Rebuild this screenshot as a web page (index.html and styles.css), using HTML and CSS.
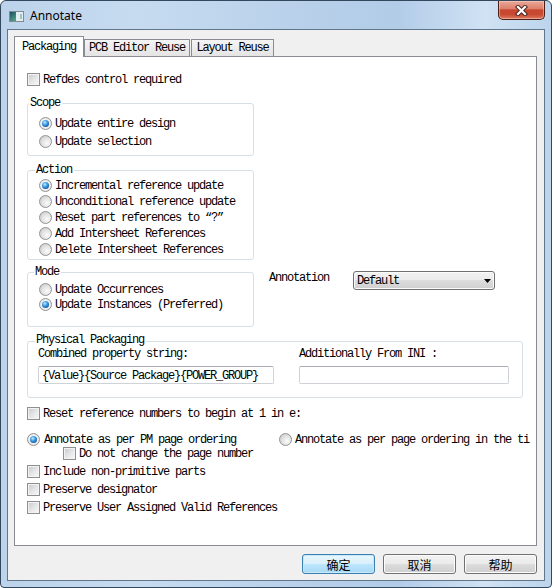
FILE: index.html
```html
<!DOCTYPE html>
<html>
<head>
<meta charset="utf-8">
<title>Annotate</title>
<link rel="stylesheet" href="styles.css">
</head>
<body>
<div class="window">
  <div class="titlebar">
    <svg class="app-icon" width="15" height="11" viewBox="0 0 15 11">
      <defs>
        <linearGradient id="ig" x1="0" y1="0" x2="0.6" y2="1">
          <stop offset="0" stop-color="#1c4f63"/>
          <stop offset="1" stop-color="#4f9c86"/>
        </linearGradient>
      </defs>
      <rect x="0.5" y="0.5" width="14" height="10" fill="#e4eef0" stroke="#7d8b92"/>
      <rect x="1" y="1" width="6" height="9" fill="url(#ig)"/>
      <rect x="11" y="3" width="2" height="5" fill="#9cc4c4"/>
    </svg>
    <span class="title">Annotate</span>
    <div class="close">
      <svg width="13" height="11" viewBox="0 0 13 11">
        <path d="M3 2 L10 9 M10 2 L3 9" stroke="#4a2620" stroke-width="4.2" stroke-linecap="square" fill="none"/>
        <path d="M3 2 L10 9 M10 2 L3 9" stroke="#ffffff" stroke-width="2.2" stroke-linecap="square" fill="none"/>
      </svg>
    </div>
  </div>
  <div class="client">
    <div class="tabs">
      <div class="tab active">Packaging</div>
      <div class="tab t2">PCB Editor Reuse</div>
      <div class="tab t3">Layout Reuse</div>
    </div>
    <div class="panel">
      <div class="row"><span class="cb"></span><span class="txt">Refdes control required</span></div>

      <div class="group g-scope">
        <span class="legend">Scope</span>
        <div class="opts">
          <div class="row"><span class="rb on"></span><span class="txt">Update entire design</span></div>
          <div class="row"><span class="rb"></span><span class="txt">Update selection</span></div>
        </div>
      </div>

      <div class="group g-action">
        <span class="legend">Action</span>
        <div class="opts">
          <div class="row"><span class="rb on"></span><span class="txt">Incremental reference update</span></div>
          <div class="row"><span class="rb"></span><span class="txt">Unconditional reference update</span></div>
          <div class="row"><span class="rb"></span><span class="txt">Reset part references to “?”</span></div>
          <div class="row"><span class="rb"></span><span class="txt">Add Intersheet References</span></div>
          <div class="row"><span class="rb"></span><span class="txt">Delete Intersheet References</span></div>
        </div>
      </div>

      <div class="mode-row">
        <div class="group g-mode">
          <span class="legend">Mode</span>
          <div class="opts">
            <div class="row"><span class="rb"></span><span class="txt">Update Occurrences</span></div>
            <div class="row"><span class="rb on"></span><span class="txt">Update Instances (Preferred)</span></div>
          </div>
        </div>
        <div class="annot">
          <span class="annot-label">Annotation</span>
          <div class="select">
            <span class="txt">Default</span>
            <svg class="arrow" width="7" height="4" viewBox="0 0 7 4"><path d="M0 0 H7 L3.5 4 Z" fill="#000"/></svg>
          </div>
        </div>
      </div>

      <div class="group g-pp">
        <span class="legend">Physical Packaging</span>
        <div class="cols">
          <div class="col c1">
            <span class="col-label">Combined property string:</span>
            <div class="input"><span class="txt">{Value}{Source Package}{POWER_GROUP}</span></div>
          </div>
          <div class="col c2">
            <span class="col-label">Additionally From INI :</span>
            <div class="input"></div>
          </div>
        </div>
      </div>

      <div class="row r-reset"><span class="cb"></span><span class="txt">Reset reference numbers to begin at 1 in e:</span></div>

      <div class="row r-pair">
        <div class="pair-item first"><span class="rb on"></span><span class="txt">Annotate as per PM page ordering</span></div>
        <div class="pair-item"><span class="rb"></span><span class="txt">Annotate as per page ordering in the ti</span></div>
      </div>
      <div class="row r-donot"><span class="cb"></span><span class="txt">Do not change the page number</span></div>
      <div class="row r-tail r-include"><span class="cb"></span><span class="txt">Include non-primitive parts</span></div>
      <div class="row r-tail"><span class="cb"></span><span class="txt">Preserve designator</span></div>
      <div class="row r-tail"><span class="cb"></span><span class="txt">Preserve User Assigned Valid References</span></div>
    </div>
    <div class="buttons">
      <div class="btn default">确定</div>
      <div class="btn">取消</div>
      <div class="btn">帮助</div>
    </div>
  </div>
</div>
</body>
</html>
```
FILE: styles.css
```css
* { box-sizing: border-box; }
html, body { margin: 0; padding: 0; }
body {
  width: 552px;
  height: 588px;
  overflow: hidden;
  background: #ffffff;
  font-family: "Liberation Mono", monospace;
  font-size: 12px;
  letter-spacing: -1.2px;
  color: #000;
}

.window {
  width: 552px;
  height: 588px;
  border: 1px solid #34485d;
  border-radius: 6px 6px 4px 4px;
  background: linear-gradient(to right, #bcd3eb 0%, #c6dbf0 25%, #b8d0ea 55%, #b2cce8 72%, #d0e2f3 88%, #bcd4ec 100%);
  padding: 0 6px 6px;
  display: flex;
  flex-direction: column;
}

.titlebar {
  height: 28px;
  display: flex;
  align-items: flex-start;
  flex: none;
}
.app-icon { margin: 10px 0 0 2px; flex: none; }
.title {
  font-family: "Noto Sans", sans-serif;
  font-size: 12px;
  letter-spacing: 0;
  line-height: 17px;
  margin: 6px 0 0 6px;
  color: #000;
}
.close {
  margin-left: auto;
  width: 47px;
  height: 19px;
  border: 1px solid #4b1f18;
  border-top: none;
  border-radius: 0 0 5px 5px;
  background: linear-gradient(#eaa999 0%, #dc806c 42%, #c7462f 50%, #c84a31 75%, #de7b60 100%);
  box-shadow: inset 0 0 0 1px rgba(255, 220, 210, 0.45);
  display: flex;
  align-items: center;
  justify-content: center;
}

.client {
  flex: 1;
  border: 1px solid #62768b;
  background: #f0f0f0;
  padding: 6px 7px 6px 6px;
  display: flex;
  flex-direction: column;
}

.tabs {
  display: flex;
  align-items: flex-end;
  height: 20px;
  flex: none;
}
.tab {
  height: 17px;
  border: 1px solid #898c95;
  border-bottom: none;
  background: linear-gradient(#f4f4f4, #e4e4e4);
  display: flex;
  align-items: center;
  justify-content: center;
  white-space: nowrap;
}
.tab.active {
  width: 70px;
  height: 21px;
  margin-bottom: -1px;
  padding-bottom: 1px;
  background: #fff;
  position: relative;
  z-index: 1;
}
.t2 { width: 106px; }
.t3 { width: 83px; margin-left: 1px; }

.panel {
  flex: 1;
  border: 1px solid #898c95;
  background: #fff;
  padding: 14px 0 0 12px;
  display: flex;
  flex-direction: column;
  align-items: flex-start;
}

.row {
  display: flex;
  align-items: center;
  height: 16px;
  white-space: nowrap;
}
.txt { line-height: 14px; padding-top: 1px; }

.cb {
  flex: none;
  width: 13px;
  height: 13px;
  border: 1px solid #8e8f8f;
  background: linear-gradient(135deg, #c6c9ce 0%, #e6e7e8 55%, #f8f8f8 100%);
  box-shadow: inset 0 0 0 1px #f3f3f3;
  margin-right: 3px;
}
.rb {
  flex: none;
  width: 13px;
  height: 13px;
  border-radius: 50%;
  border: 1px solid #929292;
  background: radial-gradient(circle at 65% 65%, #fbfbfb 0%, #e4e4e4 45%, #c4c4c4 100%);
  margin-right: 3px;
  display: flex;
  align-items: center;
  justify-content: center;
}
.rb.on { background: radial-gradient(circle at 50% 50%, #ffffff 0%, #eeeeee 60%, #d6d6d6 100%); }
.rb.on::after {
  content: "";
  width: 7px;
  height: 7px;
  border-radius: 50%;
  background: radial-gradient(circle at 40% 35%, #c2ecff 0%, #4aa6e8 35%, #1b5fae 70%, #163f78 100%);
}

.group {
  border: 1px solid #d5dfe5;
  border-radius: 3px;
  display: flex;
  flex-direction: column;
  flex: none;
}
.legend {
  align-self: flex-start;
  height: 14px;
  line-height: 14px;
  margin-top: -8px;
  padding: 0 2px 0 1px;
  background: #fff;
  white-space: nowrap;
}
.opts {
  display: flex;
  flex-direction: column;
  padding-left: 11px;
}

.g-scope { width: 227px; margin-top: 16px; }
.g-scope .legend { margin-left: 1px; }
.g-scope .opts { margin-top: 4px; padding-bottom: 5px; }
.g-scope .row { height: 18px; }

.g-action { width: 227px; margin-top: 14px; }
.g-action .legend { margin-left: 7px; }
.g-action .opts { padding-bottom: 2px; }

.mode-row {
  display: flex;
  align-items: flex-start;
  margin-top: 12px;
}
.g-mode { width: 227px; }
.g-mode .legend { margin-left: 6px; }
.g-mode .opts { margin-top: 3px; padding-bottom: 14px; }
.g-mode .row { height: 15px; }

.annot {
  display: flex;
  align-items: flex-start;
  margin: 0 0 0 15px;
}
.annot-label { line-height: 12px; white-space: nowrap; }
.select {
  margin-left: 24px;
  margin-top: -1px;
  width: 142px;
  height: 19px;
  border: 1px solid #707070;
  border-radius: 3px;
  background: linear-gradient(#f2f2f2 0%, #ebebeb 49%, #dddddd 50%, #cfcfcf 100%);
  box-shadow: inset 0 0 0 1px #fbfbfb;
  display: flex;
  align-items: center;
  padding-left: 3px;
}
.select .arrow { margin-left: auto; margin-right: 3px; }

.g-pp { width: 496px; margin-top: 14px; }
.g-pp .legend {
  margin-left: 7px;
  height: 12px;
  line-height: 12px;
  margin-top: -8px;
}
.cols {
  display: flex;
  gap: 25px;
  padding: 2px 0 13px 10px;
}
.col { display: flex; flex-direction: column; }
.c1 { width: 236px; }
.c2 { width: 210px; }
.col-label { line-height: 12px; white-space: nowrap; }
.input {
  margin-top: 6px;
  height: 18px;
  border: 1px solid #cfd3d8;
  border-top-color: #abadb3;
  border-radius: 2px;
  background: #fff;
  padding: 0 3px;
  display: flex;
  align-items: center;
  white-space: nowrap;
  overflow: hidden;
}

.r-reset { margin-top: 7px; }
.r-pair { margin-top: 11px; height: 14px; }
.pair-item { display: flex; align-items: center; }
.pair-item.first { width: 252px; }
.pair-item.first .rb { margin-right: 4px; }
.r-donot { height: 14px; margin-left: 36px; }
.r-tail { height: 18px; }
.r-include { margin-top: 2px; }

.buttons {
  flex: none;
  display: flex;
  justify-content: flex-end;
  gap: 8px;
  margin-top: 8px;
}
.btn {
  width: 73px;
  height: 20px;
  border: 1px solid #707070;
  border-radius: 3px;
  background: linear-gradient(#f2f2f2 0%, #ebebeb 49%, #dddddd 50%, #cfcfcf 100%);
  box-shadow: inset 0 0 0 1px #fcfcfc;
  font-family: "Noto Sans CJK SC", sans-serif;
  font-size: 12px;
  letter-spacing: 0;
  display: flex;
  align-items: center;
  justify-content: center;
}
.btn.default {
  border-color: #3c7fb1;
  background: linear-gradient(#eaf6fd 0%, #d9f0fc 49%, #bee6fd 50%, #a7d9f5 100%);
  box-shadow: inset 0 0 0 1px #c6e8f8;
}
```
